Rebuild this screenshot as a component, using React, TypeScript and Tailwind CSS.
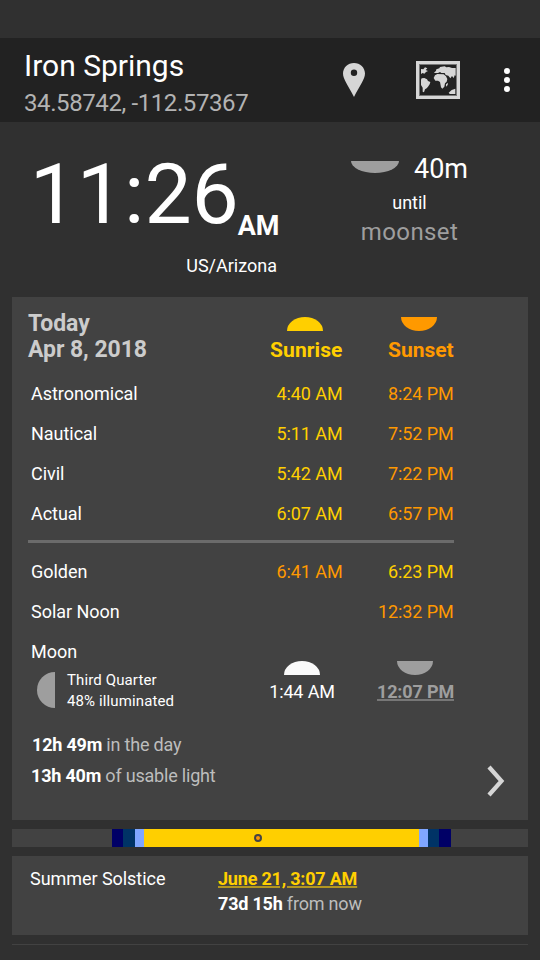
type HalfProps = { up?: boolean; w: number; h: number; color: string };

function Half({ up = false, w, h, color }: HalfProps) {
  const d = up
    ? `M0 ${h}A${w / 2} ${h} 0 0 1 ${w} ${h}Z`
    : `M0 0A${w / 2} ${h} 0 0 0 ${w} 0Z`;
  return (
    <svg className="block shrink-0" width={w} height={h} viewBox={`0 0 ${w} ${h}`}>
      <path d={d} fill={color} />
    </svg>
  );
}

function PinIcon() {
  return (
    <svg className="block" width="22" height="34" viewBox="0 0 22 34">
      <path
        fillRule="evenodd"
        fill="#d6d6d6"
        d="M11 0C4.900 0 0 4.600 0 10.600C0 16 5.500 23.500 11 34C16.500 23.500 22 16 22 10.600C22 4.600 17.100 0 11 0ZM11 6.500A3.200 3.200 0 1 1 11 12.900A3.200 3.200 0 1 1 11 6.500Z"
      />
    </svg>
  );
}

function MapIcon() {
  return (
    <svg className="block" width="44" height="38" viewBox="0 0 132 114">
      <rect x="10" y="10" width="112" height="94" fill="none" stroke="#777" strokeWidth="4" />
      <rect x="4.500" y="4.500" width="123" height="105" fill="none" stroke="#d6d6d6" strokeWidth="9" />
      <g fill="#d6d6d6">
        <path d="M15 24L22 25L27 19L34 22L29 27L36 30L30 33L25 38L20 36L15 39Z" />
        <path d="M17 52L25 51L33 55L36 60L43 63L41 70L36 77L32 82L27 85L24 94L20 92L20 80L15 72V56Z" />
        <path d="M55 34L60 30L61 25L70 22L72 18L86 16L91 19L99 18L108 21H119V44L116 43L113 51L108 45L103 52L97 44L89 42L86 36L76 36L72 33L66 36H55Z" />
        <path d="M57 43L64 39L83 40L90 46L94 54L92 62L87 67L85 77L79 83L75 79L72 63L66 59H58L53 51Z" />
        <path d="M90 70L96 65L95 72L90 77Z" />
        <path d="M98 95L107 87L118 83V99H101Z" />
      </g>
    </svg>
  );
}

type Row = { label: string; rise?: string; set: string; riseColor?: string; setColor?: string };

function TimeRow({ label, rise, set, riseColor = "text-[#ffcf00]", setColor = "text-[#ff9900]" }: Row) {
  return (
    <div className="flex h-10 items-center pl-[3px] tracking-[-0.1px]">
      <span className="w-[212px] tracking-[-0.03px]">{label}</span>
      <span className={`w-[99.500px] text-right ${riseColor}`}>{rise}</span>
      <span className={`w-[111px] text-right ${setColor}`}>{set}</span>
    </div>
  );
}

const twilight: Row[] = [
  { label: "Astronomical", rise: "4:40 AM", set: "8:24 PM" },
  { label: "Nautical", rise: "5:11 AM", set: "7:52 PM" },
  { label: "Civil", rise: "5:42 AM", set: "7:22 PM" },
  { label: "Actual", rise: "6:07 AM", set: "6:57 PM" },
];

export default function App() {
  return (
    <div className="flex h-[960px] w-[540px] flex-col overflow-hidden bg-[#303030] pt-[38px] font-[Roboto,sans-serif] text-[18px] leading-5 text-white">
      <header className="flex h-[84px] shrink-0 bg-[#222222]">
        <div className="w-[343px] pt-[13px] pl-6">
          <h1 className="text-[30px] leading-[30px]">Iron Springs</h1>
          <p className="mt-[7px] text-[24px] leading-[30px] tracking-[-0.4px] text-[#b3b3b3]">34.58742, -112.57367</p>
        </div>
        <div className="flex h-[84px] items-center">
          <PinIcon />
          <div className="ml-[51px]"><MapIcon /></div>
          <div className="ml-11 flex flex-col gap-[3px]">
            <i className="size-1.5 rounded-full bg-white" />
            <i className="size-1.5 rounded-full bg-white" />
            <i className="size-1.5 rounded-full bg-white" />
          </div>
        </div>
      </header>

      <section className="flex h-[175px] shrink-0">
        <div className="w-[279px] pt-[27px]">
          <div className="flex h-[90px] justify-end">
            <span className="text-[84px] leading-[92px]">11:26</span>
            <span className="-ml-px pt-[62px] text-[27px] leading-[30px] font-bold tracking-[-0.3px]">AM</span>
          </div>
          <p className="mt-[17px] pr-[2px] text-right">US/Arizona</p>
        </div>
        <div className="flex flex-1 flex-col items-center">
          <div className="mt-[32px] flex h-[30px]">
            <div className="pt-[7px]"><Half w={48} h={12} color="#9e9e9e" /></div>
            <span className="ml-[15px] text-[27px] leading-[30px]">40m</span>
          </div>
          <p className="mt-[9px]">until</p>
          <p className="mt-[4px] text-[24px] leading-[30px] tracking-[0.4px] text-[#9e9e9e]">moonset</p>
        </div>
      </section>

      <main className="mx-3 h-[523px] shrink-0 bg-[#424242] pl-4">
        <div className="flex h-[77px] w-[426px] pt-[13px]">
          <h2 className="w-[242px] pt-px text-[23px] leading-[26px] font-bold tracking-[-0.05px] text-[#cccccc]">
            Today<br />Apr 8, 2018
          </h2>
          <div className="flex w-[73px] flex-col pt-[7px] text-[21px] font-bold tracking-[0.1px] text-[#ffcf00]">
            <div className="ml-[17px]"><Half up w={36} h={14} color="#ffcf00" /></div>
            <span className="mt-[9px] leading-5">Sunrise</span>
          </div>
          <div className="ml-[45px] flex w-[66px] flex-col pt-[7px] text-[21px] font-bold text-[#ff9900]">
            <div className="ml-[13px]"><Half w={36} h={14} color="#ff9900" /></div>
            <span className="mt-[9px] leading-5">Sunset</span>
          </div>
        </div>
        {twilight.map((row) => <TimeRow key={row.label} {...row} />)}
        <div className="mt-[6px] mb-[9px] h-[3px] w-[426px] bg-[#6b6b6b]" />
        <TimeRow label="Golden" rise="6:41 AM" set="6:23 PM" riseColor="text-[#ff9900]" setColor="text-[#ffcf00]" />
        <TimeRow label="Solar Noon" set="12:32 PM" />
        <div className="flex h-[76px] w-[426px]">
          <div className="w-[241px] pt-[10px] pl-[3px]">
            <p>Moon</p>
            <div className="mt-[10px] flex pl-[6px]">
              <i className="h-9 w-[18px] rounded-l-full bg-[#9e9e9e]" />
              <p className="-mt-[2px] ml-3 text-[15px] leading-[21px] tracking-[0.12px]">Third Quarter<br />48% illuminated</p>
            </div>
          </div>
          <div className="flex w-[66px] flex-col items-center pt-[29px] whitespace-nowrap">
            <Half up w={36} h={14} color="#fafafa" />
            <span className="mt-[7px] tracking-[-0.15px]">1:44 AM</span>
          </div>
          <div className="ml-[40px] flex w-[79px] flex-col pt-[29px] font-bold whitespace-nowrap text-[#9e9e9e]">
            <div className="ml-[22px]"><Half w={36} h={14} color="#9e9e9e" /></div>
            <span className="mt-[7px] self-end tracking-[-0.15px] underline decoration-[#777777] decoration-2 underline-offset-1">12:07 PM</span>
          </div>
        </div>
        <div className="flex w-[500px]">
          <div className="w-[459px] pt-[21px] pl-[3px] leading-[31px] tracking-[-0.2px] text-[#bdbdbd]">
            <p className="pl-px"><b className="text-white">12h 49m</b> in the day</p>
            <p><b className="text-white">13h 40m</b> of usable light</p>
          </div>
          <svg className="mt-[57px]" width="18" height="32" viewBox="0 0 18 32">
            <path d="M2 2L14.500 16L2 30" fill="none" stroke="#d6d6d6" strokeWidth="4.200" />
          </svg>
        </div>
      </main>

      <div className="mx-3 mt-[9px] flex h-[18px] shrink-0 bg-[#424242]">
        <i className="ml-[100px] w-[11px] bg-[#000066]" />
        <i className="w-3 bg-[#003366]" />
        <i className="w-[9px] bg-[#80a6ff]" />
        <div className="flex w-[275px] items-center bg-[#ffcf00] pl-[110px]">
          <i className="size-2 rounded-full border-2 border-[#444444] bg-[#ff9900]" />
        </div>
        <i className="w-[9px] bg-[#80a6ff]" />
        <i className="w-[11px] bg-[#003366]" />
        <i className="w-3 bg-[#000066]" />
      </div>

      <section className="mx-3 mt-[9px] flex h-[79px] shrink-0 bg-[#424242] pt-[10px] pl-[18px] leading-[25px]">
        <p className="w-[188px] tracking-[-0.05px]">Summer Solstice</p>
        <div className="tracking-[-0.2px] text-[#bdbdbd]">
          <p className="font-bold text-[#ffcf00] underline decoration-[#b29621] decoration-2 underline-offset-1">June 21, 3:07 AM</p>
          <p><b className="text-white">73d 15h</b> from now</p>
        </div>
      </section>
      <div className="mx-3 mt-[9px] h-px shrink-0 bg-[#424242]" />
    </div>
  );
}
